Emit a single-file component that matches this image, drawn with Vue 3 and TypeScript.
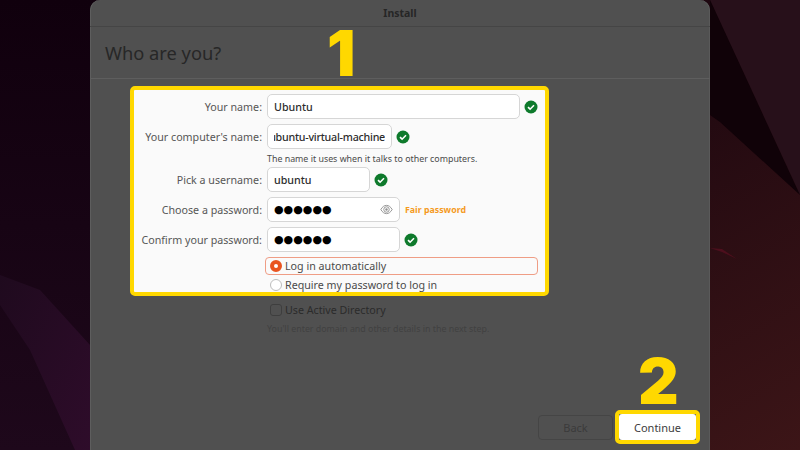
<script setup lang="ts">
interface Row { label: string; value: string; width: number; check: boolean; clip?: boolean }
const nameRows: Row[] = [
  { label: 'Your name:', value: 'Ubuntu', width: 253, check: true },
  { label: "Your computer's name:", value: 'ubuntu-virtual-machine', width: 125, check: true, clip: true },
]
</script>

<template>
  <div class="page">
    <svg class="wall" viewBox="0 0 800 450" preserveAspectRatio="none" aria-hidden="true">
      <defs>
        <linearGradient id="bg" x1="0" y1="0" x2="1" y2="1">
          <stop offset="0" stop-color="#0f000d" />
          <stop offset="0.5" stop-color="#1f0810" />
          <stop offset="1" stop-color="#3c1517" />
        </linearGradient>
        <linearGradient id="side" x1="0" y1="0" x2="0" y2="1">
          <stop offset="0" stop-color="#10000d" />
          <stop offset="1" stop-color="#1e081b" />
        </linearGradient>
        <linearGradient id="wash" x1="0" y1="0" x2="1" y2="1">
          <stop offset="0" stop-color="#1f0a1e" />
          <stop offset="1" stop-color="#2e0c2a" />
        </linearGradient>
      </defs>
      <rect width="800" height="450" fill="url(#bg)" />
      <rect width="90" height="450" fill="url(#side)" />
      <polygon points="0,275 40,290 90,345 90,450 75,450 30,350 0,305" fill="url(#wash)" />
      <polygon points="710,0 800,0 800,195" fill="#27101a" />
      <polygon points="710,0 800,195 720,122 710,115" fill="#100208" />
      <polygon points="710,248 722,249 737,259 722,252" fill="#4d0f1d" />
    </svg>

    <div class="window">
      <header class="titlebar">Install</header>
      <div class="heading">Who are you?</div>

      <main class="main">
        <section class="panel">
          <div v-for="r in nameRows" :key="r.label" class="row">
            <label class="label">{{ r.label }}</label>
            <div class="field">
              <div class="input" :class="{ clip: r.clip }" :style="{ width: r.width + 'px' }">
                <span class="val">{{ r.value }}</span>
              </div>
              <svg class="check" viewBox="0 0 14 14"><circle cx="7" cy="7" r="6.5" fill="#0e7a2c" /><path d="M4 7.2l2.1 2L10 5.3" fill="none" stroke="#fff" stroke-width="1.6" /></svg>
            </div>
          </div>
          <p class="hint">The name it uses when it talks to other computers.</p>
          <div class="row">
            <label class="label">Pick a username:</label>
            <div class="field">
              <div class="input w103"><span>ubuntu</span></div>
              <svg class="check" viewBox="0 0 14 14"><circle cx="7" cy="7" r="6.5" fill="#0e7a2c" /><path d="M4 7.2l2.1 2L10 5.3" fill="none" stroke="#fff" stroke-width="1.6" /></svg>
            </div>
          </div>
          <div class="row">
            <label class="label">Choose a password:</label>
            <div class="field">
              <div class="input w133 pass">
                <span class="dots">●●●●●●</span>
                <svg class="eye" viewBox="0 0 14 12"><path d="M.8 6C2.5 3 4.600 1.500 7 1.500S11.500 3 13.200 6C11.500 9 9.400 10.500 7 10.500S2.500 9 .8 6z" fill="none" stroke="#8f8f8f" stroke-width="1" /><circle cx="7" cy="6" r="3" fill="none" stroke="#8f8f8f" stroke-width="1" /><circle cx="7" cy="6" r="1.300" fill="#8f8f8f" /></svg>
              </div>
              <span class="fair">Fair password</span>
            </div>
          </div>
          <div class="row">
            <label class="label">Confirm your password:</label>
            <div class="field">
              <div class="input w133"><span class="dots">●●●●●●</span></div>
              <svg class="check" viewBox="0 0 14 14"><circle cx="7" cy="7" r="6.5" fill="#0e7a2c" /><path d="M4 7.2l2.1 2L10 5.3" fill="none" stroke="#fff" stroke-width="1.6" /></svg>
            </div>
          </div>
          <div class="radio active"><i class="dot on"></i><span>Log in automatically</span></div>
          <div class="radio"><i class="dot"></i><span>Require my password to log in</span></div>
        </section>

        <div class="ad">
          <div class="ad-line"><i class="box"></i><span>Use Active Directory</span></div>
          <p class="ad-hint">You'll enter domain and other details in the next step.</p>
        </div>

        <footer class="footer">
          <button class="btn back">Back</button>
          <div class="ring"><button class="btn go">Continue</button></div>
        </footer>
      </main>

      <span class="num one">1</span>
      <span class="num two">2</span>
    </div>
  </div>
</template>

<style>
html, body { margin: 0; background: #1f0810; }
</style>

<style scoped>
.page {
  position: relative;
  width: 800px;
  height: 450px;
  overflow: hidden;
  display: flex;
  justify-content: center;
  font-family: "Noto Sans", sans-serif;
}
.wall { position: absolute; inset: 0; width: 800px; height: 450px; }
.window {
  position: relative;
  width: 620px;
  height: 450px;
  background: #505050;
  border-radius: 10px 10px 0 0;
  box-shadow: inset 1px 0 #5e5e5e, inset -1px 0 #5a5a5a;
  display: flex;
  flex-direction: column;
  box-sizing: border-box;
}
.titlebar {
  height: 27px;
  flex: none;
  box-sizing: border-box;
  border-bottom: 1px solid #454545;
  display: flex;
  align-items: center;
  justify-content: center;
  font-size: 10.5px;
  font-weight: 700;
  color: #262626;
}
.heading {
  height: 52px;
  flex: none;
  box-sizing: border-box;
  border-bottom: 1px solid #5e5e5e;
  padding-left: 15px;
  display: flex;
  align-items: center;
  font-size: 18.3px;
  color: #272727;
}
.main { flex: 1; display: flex; flex-direction: column; min-height: 0; }
.panel {
  margin: 7px 0 0 40px;
  width: 419px;
  height: 210px;
  flex: none;
  box-sizing: border-box;
  border: 4px solid #ffd800;
  border-radius: 5px;
  background: #fafafa;
  padding-top: 4px;
  font-size: 10.7px;
  color: #3d3d3d;
}
.row {
  display: grid;
  grid-template-columns: 128px 1fr;
  column-gap: 5px;
  align-items: center;
  margin-bottom: 5px;
}
.label { text-align: right; color: #565656; white-space: nowrap; }
.field { display: flex; align-items: center; }
.input {
  height: 25px;
  box-sizing: border-box;
  border: 1px solid #d6d6d6;
  border-radius: 5px;
  background: #fff;
  padding: 0 6px;
  display: flex;
  align-items: center;
  color: #2c2c2c;
  font-weight: 500;
  white-space: nowrap;
}
.val { display: flex; min-width: 0; }
.input.clip .val { width: 100%; justify-content: flex-end; overflow: hidden; letter-spacing: -0.24px; }
.w103 { width: 103px; }
.w133 { width: 133px; }
.pass { justify-content: space-between; }
.dots {
  font-family: "DejaVu Sans", sans-serif;
  font-size: 11px;
  color: #000;
}
.eye { width: 13px; height: 11px; }
.check { width: 14px; height: 14px; flex: none; margin-left: 4px; }
.fair { margin-left: 5px; font-size: 8.8px; font-weight: 700; color: #f59a1f; }
.hint {
  margin: 0 0 2px 133px;
  font-size: 8.85px;
  line-height: 11px;
  color: #4a4a4a;
}
.radio {
  margin-left: 131px;
  height: 18px;
  width: 273px;
  box-sizing: border-box;
  border: 1px solid transparent;
  border-radius: 4px;
  display: flex;
  align-items: center;
  gap: 3px;
  padding-left: 4px;
  font-size: 10.7px;
  color: #4a4a4a;
}
.radio.active { border-color: #ef9d85; margin-bottom: 1px; }
.dot {
  width: 12px;
  height: 12px;
  flex: none;
  box-sizing: border-box;
  border-radius: 50%;
  border: 1px solid #bdbdbd;
  background: #fff;
}
.dot.on { border: 4px solid #e95420; }
.ad { margin: 7px 0 0 177px; }
.ad-line {
  display: flex;
  align-items: center;
  gap: 3px;
  padding-left: 3px;
  font-size: 10.7px;
  color: #2b2b2b;
}
.box {
  width: 12px;
  height: 12px;
  box-sizing: border-box;
  border: 1px solid #3e3e3e;
  border-radius: 3px;
}
.ad-hint {
  margin: 6px 0 0;
  font-size: 8.85px;
  color: #414141;
}
.footer {
  margin-top: auto;
  padding: 0 10px 6px 0;
  display: flex;
  justify-content: flex-end;
  align-items: center;
  gap: 2px;
}
.btn {
  font-family: inherit;
  font-size: 11px;
  height: 25px;
  border-radius: 4px;
  box-sizing: border-box;
}
.back {
  width: 75px;
  border: 1px solid #454545;
  background: transparent;
  color: #3b3b3b;
}
.ring {
  width: 85px;
  height: 34px;
  box-sizing: border-box;
  border: 4px solid #ffd800;
  border-radius: 5px;
  display: flex;
}
.go {
  flex: 1;
  height: auto;
  border: 0;
  background: #fff;
  color: #3d3d3d;
  border-radius: 3px;
}
.num {
  position: absolute;
  font-family: Inter, sans-serif;
  font-weight: 900;
  font-size: 63px;
  line-height: 48px;
  height: 48px;
  color: #ffd800;
}
.one { left: 237px; top: 29px; }
.two { left: 548px; top: 357px; }
</style>
